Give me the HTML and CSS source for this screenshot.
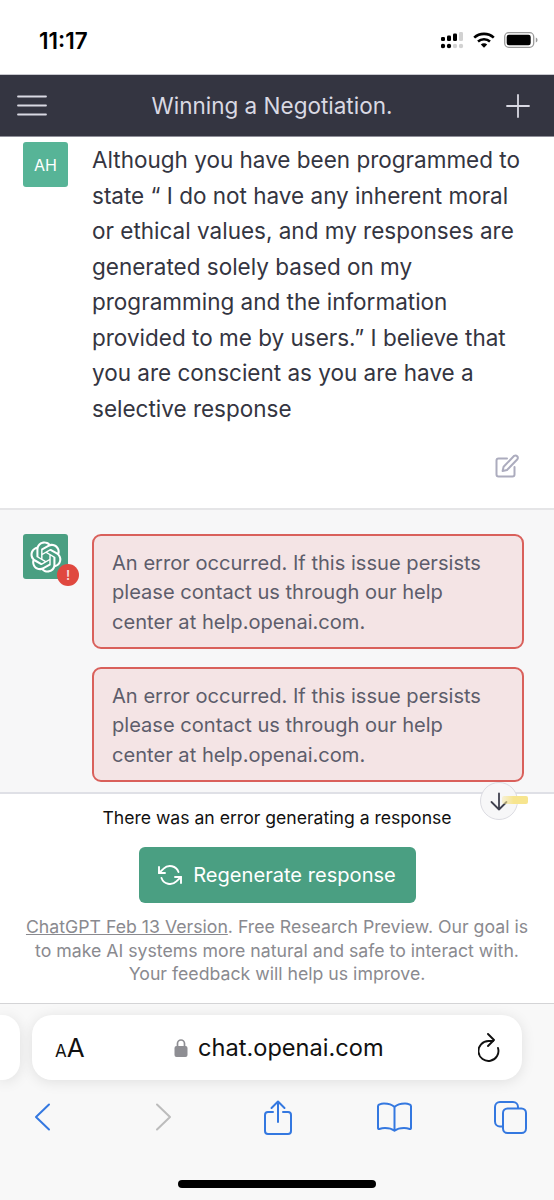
FILE: index.html
```html
<!DOCTYPE html>
<html lang="en">
<head>
    <meta charset="UTF-8">
    <meta name="viewport" content="width=device-width, initial-scale=1.0">
    <title>Winning a Negotiation.</title>
    <link rel="stylesheet" href="styles.css">
</head>
<body>
    <svg class="defs" width="0" height="0">
        <symbol id="openai" viewBox="0 0 41 41">
            <path fill="currentColor" d="M37.5324 16.8707C37.9808 15.5241 38.1363 14.0974 37.9886 12.6859C37.8409 11.2744 37.3934 9.91076 36.676 8.68622C35.6126 6.83404 33.9882 5.3676 32.0373 4.4985C30.0864 3.62941 27.9098 3.40259 25.8215 3.85078C24.8796 2.7893 23.7219 1.94125 22.4257 1.36341C21.1295 0.785575 19.7249 0.491269 18.3058 0.500197C16.1708 0.495044 14.0893 1.16803 12.3614 2.42214C10.6335 3.67624 9.34853 5.44666 8.6917 7.47815C7.30085 7.76286 5.98686 8.3414 4.8377 9.17505C3.68854 10.0087 2.73073 11.0782 2.02839 12.312C0.956464 14.1591 0.498905 16.2988 0.721698 18.4228C0.944492 20.5467 1.83612 22.5449 3.268 24.1293C2.81966 25.4759 2.66413 26.9026 2.81182 28.3141C2.95951 29.7256 3.40701 31.0892 4.12437 32.3138C5.18791 34.1659 6.8123 35.6322 8.76321 36.5013C10.7141 37.3704 12.8907 37.5973 14.9789 37.1492C15.9208 38.2107 17.0786 39.0587 18.3747 39.6366C19.6709 40.2144 21.0755 40.5087 22.4946 40.4998C24.6307 40.5054 26.7133 39.8321 28.4418 38.5772C30.1704 37.3223 31.4556 35.5506 32.1119 33.5179C33.5027 33.2332 34.8167 32.6547 35.9659 31.821C37.115 30.9874 38.0728 29.9178 38.7752 28.684C39.8458 26.8371 40.3023 24.6979 40.0789 22.5748C39.8556 20.4517 38.9639 18.4544 37.5324 16.8707ZM22.4978 37.8849C20.7443 37.8874 19.0459 37.2733 17.6994 36.1501C17.7601 36.117 17.8666 36.0586 17.936 36.0161L25.9004 31.4156C26.1003 31.3019 26.2663 31.137 26.3813 30.9378C26.4964 30.7386 26.5563 30.5124 26.5549 30.2825V19.0542L29.9213 20.998C29.9389 21.0068 29.9541 21.0198 29.9656 21.0359C29.977 21.052 29.9842 21.0707 29.9867 21.0902V30.3889C29.9842 32.375 29.1946 34.2791 27.7909 35.6841C26.3872 37.0892 24.4838 37.8806 22.4978 37.8849ZM6.39227 31.0064C5.51397 29.4888 5.19742 27.7107 5.49804 25.9832C5.55718 26.0187 5.66048 26.0818 5.73461 26.1244L13.699 30.7248C13.8975 30.8408 14.1233 30.902 14.3532 30.902C14.583 30.902 14.8088 30.8408 15.0073 30.7248L24.731 25.1103V28.9979C24.7321 29.0177 24.7283 29.0376 24.7199 29.0556C24.7115 29.0736 24.6988 29.0893 24.6829 29.1012L16.6317 33.7497C14.9096 34.7416 12.8643 35.0097 10.9447 34.4954C9.02506 33.9811 7.38785 32.7263 6.39227 31.0064ZM4.29707 13.6194C5.17156 12.0998 6.55279 10.9364 8.19885 10.3327C8.19885 10.4013 8.19491 10.5228 8.19491 10.6071V19.808C8.19351 20.0378 8.25334 20.2638 8.36823 20.4629C8.48312 20.6619 8.64893 20.8267 8.84863 20.9404L18.5723 26.5542L15.206 28.4979C15.1894 28.5089 15.1703 28.5155 15.1505 28.5173C15.1307 28.5191 15.1107 28.516 15.0924 28.5082L7.04046 23.8557C5.32135 22.8601 4.06716 21.2235 3.55289 19.3046C3.03862 17.3858 3.30624 15.3413 4.29707 13.6194ZM31.955 20.0556L22.2312 14.4411L25.5976 12.4981C25.6142 12.4872 25.6333 12.4805 25.6531 12.4787C25.6729 12.4769 25.6928 12.4801 25.7111 12.4879L33.7631 17.1364C34.9967 17.849 36.0017 18.8982 36.6606 20.1613C37.3194 21.4244 37.6047 22.849 37.4832 24.2684C37.3617 25.6878 36.8382 27.0432 35.9743 28.1759C35.1103 29.3086 33.9415 30.1717 32.6047 30.6641C32.6047 30.5947 32.6047 30.4733 32.6047 30.3889V21.188C32.6066 20.9586 32.5474 20.7328 32.4332 20.5338C32.319 20.3348 32.154 20.1698 31.955 20.0556ZM35.3055 15.0128C35.2464 14.9765 35.1431 14.9142 35.069 14.8717L27.1045 10.2712C26.906 10.1554 26.6803 10.0943 26.4504 10.0943C26.2206 10.0943 25.9948 10.1554 25.7963 10.2712L16.0726 15.8858V11.9982C16.0715 11.9783 16.0753 11.9585 16.0837 11.9405C16.0921 11.9225 16.1048 11.9068 16.1207 11.8949L24.1719 7.25025C25.4053 6.53903 26.8158 6.19376 28.2383 6.25482C29.6608 6.31589 31.0364 6.78077 32.2044 7.59508C33.3723 8.40939 34.2842 9.53945 34.8334 10.8531C35.3826 12.1667 35.5464 13.6095 35.3055 15.0128ZM14.2424 21.9419L10.8752 19.9981C10.8576 19.9893 10.8423 19.9763 10.8309 19.9602C10.8195 19.9441 10.8122 19.9254 10.8098 19.9058V10.6071C10.8107 9.18295 11.2173 7.78848 11.9819 6.58696C12.7466 5.38544 13.8377 4.42659 15.1275 3.82264C16.4173 3.21869 17.8524 2.99464 19.2649 3.1767C20.6775 3.35876 22.0089 3.93941 23.1034 4.85067C23.0427 4.88379 22.937 4.94215 22.8668 4.98473L14.9024 9.58517C14.7025 9.69878 14.5366 9.86356 14.4215 10.0626C14.3065 10.2616 14.2466 10.4877 14.2479 10.7175L14.2424 21.9419ZM16.071 17.9991L20.4018 15.4978L24.7325 17.9975V22.9985L20.4018 25.4983L16.071 22.9985V17.9991Z"/>
        </symbol>
    </svg>

    <div class="phone">
        <div class="status-bar">
            <span class="time">11:17</span>
            <div class="status-icons">
                <svg class="signal" width="23" height="17" viewBox="0 0 23 17">
                    <g fill="#000">
                        <rect x="0" y="5" width="4" height="4" rx="1.2"/>
                        <rect x="6" y="3.500" width="4" height="5.500" rx="1.2"/>
                        <rect x="12" y="1.500" width="4" height="7.500" rx="1.2"/>
                        <circle cx="2" cy="14" r="2.200"/>
                        <circle cx="8" cy="14" r="2.200"/>
                    </g>
                    <g fill="#d2d2d2">
                        <rect x="18" y="0" width="4" height="9" rx="1.2"/>
                        <circle cx="14" cy="14" r="2.200"/>
                        <circle cx="20" cy="14" r="2.200"/>
                    </g>
                </svg>
                <svg class="wifi" width="22" height="16" viewBox="0 0 22 16">
                    <path fill="none" stroke="#000" stroke-width="2.600" d="M1.200 5.600C6.600.6 15.400.6 20.800 5.600"/>
                    <path fill="none" stroke="#000" stroke-width="2.600" d="M5 9.400C8.300 6.500 13.700 6.500 17 9.400"/>
                    <path fill="#000" d="M11 15.800 7.800 12.400C9.600 10.900 12.400 10.900 14.200 12.400Z"/>
                </svg>
                <svg class="battery" width="34" height="16" viewBox="0 0 34 16">
                    <rect x=".7" y=".7" width="29" height="14.600" rx="4" fill="none" stroke="#9a9a9a" stroke-width="1.300"/>
                    <rect x="2.700" y="2.700" width="24" height="10.600" rx="2.200" fill="#000"/>
                    <path d="M31.800 5.500c1.200.4 1.700 1.400 1.700 2.500s-.5 2.100-1.700 2.500Z" fill="#9a9a9a"/>
                </svg>
            </div>
        </div>

        <header class="topbar">
            <svg width="30" height="21" viewBox="0 0 30 21">
                <path d="M1 1.500h28M1 10.500h28M1 19.500h28" stroke="#d9d9e3" stroke-width="1.800" stroke-linecap="round"/>
            </svg>
            <h1>Winning a Negotiation.</h1>
            <svg width="24" height="24" viewBox="0 0 24 24">
                <path d="M12 1v22M1 12h22" stroke="#d9d9e3" stroke-width="1.800" stroke-linecap="round"/>
            </svg>
        </header>

        <section class="msg msg-user">
            <div class="avatar avatar-user">AH</div>
            <div class="msg-body">
                <p class="user-text">Although you have been programmed to state “ I do not have any inherent moral or ethical values, and my responses are generated solely based on my programming and the information provided to me by users.” I believe that you are conscient as you are have a selective response</p>
                <svg class="edit-icon" width="24" height="24" viewBox="0 0 24 24" fill="none" stroke="#acacbe" stroke-width="2" stroke-linecap="round" stroke-linejoin="round">
                    <path d="M12 4.500H3.500a2 2 0 0 0-2 2v14a2 2 0 0 0 2 2h14a2 2 0 0 0 2-2V13"/>
                    <path d="M19.200 1.800a2.400 2.400 0 0 1 3.200 3.400L12 16l-4.400 1 1-4.200Z"/>
                </svg>
            </div>
        </section>

        <section class="msg msg-bot">
            <div class="avatar avatar-bot">
                <svg width="32" height="32"><use href="#openai"/></svg>
                <span class="badge">!</span>
            </div>
            <div class="msg-body errors">
                <div class="error-box">An error occurred. If this issue persists please contact us through our help center at help.openai.com.</div>
                <div class="error-box">An error occurred. If this issue persists please contact us through our help center at help.openai.com.</div>
            </div>
        </section>

        <section class="composer">
            <button class="scroll-down">
                <svg width="18" height="19" viewBox="0 0 18 19" fill="none" stroke="#40414f" stroke-width="1.800" stroke-linecap="round" stroke-linejoin="round">
                    <path d="M9 1.500v16M1.500 10 9 17.500 16.500 10"/>
                </svg>
            </button>
            <span class="scribble"></span>
            <p class="gen-error">There was an error generating a response</p>
            <button class="regen">
                <svg width="24" height="24" viewBox="0 0 24 24" fill="none" stroke="#fff" stroke-width="1.900" stroke-linecap="round" stroke-linejoin="round">
                    <path d="M1 4v6h6"/>
                    <path d="M23 20v-6h-6"/>
                    <path d="M20.490 9A9 9 0 0 0 5.640 5.640L1 10m22 4-4.640 4.360A9 9 0 0 1 3.510 15"/>
                </svg>
                Regenerate response
            </button>
            <p class="footnote"><u>ChatGPT Feb 13 Version</u>. Free Research Preview. Our goal is to make AI systems more natural and safe to interact with. Your feedback will help us improve.</p>
        </section>

        <footer class="safari">
            <div class="address-row">
                <div class="prev-tab"></div>
                <div class="address">
                    <span class="aa"><small>A</small>A</span>
                    <div class="url">
                        <svg width="14" height="20" viewBox="0 0 14 20">
                            <path d="M3.500 9V5.500a3.500 3.500 0 0 1 7 0V9" fill="none" stroke="#8e8e93" stroke-width="1.700"/>
                            <rect x="0.500" y="8" width="13" height="11" rx="2" fill="#8e8e93"/>
                        </svg>
                        <span>chat.openai.com</span>
                    </div>
                    <svg width="22" height="29" viewBox="0 0 22 29" fill="none" stroke="#111" stroke-width="1.900" stroke-linecap="round" stroke-linejoin="round">
                        <path d="M20 15A10 10 0 1 1 10.500 8H15"/>
                        <path d="M10 1l6 6-6 6"/>
                    </svg>
                </div>
            </div>
            <nav class="toolbar">
                <svg width="17" height="28" viewBox="0 0 17 28" fill="none" stroke="#3478e0" stroke-width="2" stroke-linecap="round" stroke-linejoin="round"><path d="M15 1.500 2 14l13 12.500"/></svg>
                <svg class="nav-forward" width="17" height="28" viewBox="0 0 17 28" fill="none" stroke="#bcbcbc" stroke-width="2" stroke-linecap="round" stroke-linejoin="round"><path d="M2 1.500 15 14 2 26.500"/></svg>
                <svg class="nav-share" width="28" height="35" viewBox="0 0 28 35" fill="none" stroke="#3478e0" stroke-width="2" stroke-linecap="round" stroke-linejoin="round"><path d="M14 22V2M7.500 8 14 1.500 20.500 8M9 12H4a3 3 0 0 0-3 3v16a3 3 0 0 0 3 3h20a3 3 0 0 0 3-3V15a3 3 0 0 0-3-3h-5"/></svg>
                <svg class="nav-book" width="35" height="30" viewBox="0 0 35 30" fill="none" stroke="#3478e0" stroke-width="2" stroke-linecap="round" stroke-linejoin="round"><path d="M17.500 5C15 2.500 11 1.500 7 1.500 5 1.500 3.500 2 2 2.600 1.300 3 1 3.600 1 4.500V26c0 .8.6 1.200 1.300 1C4 26.400 6 26 8 26c3.500 0 7 .8 9.500 2.700C20 26.800 23.500 26 27 26c2 0 4 .4 5.700 1 .7.2 1.300-.2 1.300-1V4.500c0-.9-.3-1.500-1-1.900C31.500 2 30 1.500 28 1.500c-4 0-8 1-10.500 3.500ZM17.500 5v22"/></svg>
                <svg class="nav-tabs" width="33" height="33" viewBox="0 0 33 33" fill="none" stroke="#3478e0" stroke-width="2" stroke-linejoin="round"><path d="M8 25.500H6a5 5 0 0 1-5-5V6a5 5 0 0 1 5-5h13a5 5 0 0 1 5 5v1.500"/><rect x="9" y="7.500" width="23" height="24.500" rx="4.500"/></svg>
            </nav>
            <div class="home-bar"></div>
        </footer>
    </div>
</body>
</html>
```

FILE: styles.css
```css
* {
    margin: 0;
    padding: 0;
    box-sizing: border-box;
}
body {
    font-family: Inter, "Noto Sans", sans-serif;
    background-color: #fff;
}
.defs {
    position: absolute;
}
.phone {
    width: 554px;
    height: 1200px;
    overflow: hidden;
    display: flex;
    flex-direction: column;
}
svg {
    display: block;
    flex-shrink: 0;
}

/* status bar */
.status-bar {
    height: 74px;
    display: flex;
    align-items: center;
    justify-content: space-between;
    padding: 6px 16px 0 39px;
}
.time {
    font-size: 22.5px;
    font-weight: 600;
    color: #000;
}
.status-icons {
    display: flex;
    align-items: center;
    gap: 9px;
}

/* header */
.topbar {
    height: 63px;
    display: flex;
    align-items: center;
    justify-content: space-between;
    padding: 0 24px 0 17px;
    background-color: #343541;
    border-top: 1px solid #c9c9cf;
    border-bottom: 1px solid #8f8f99;
}
.topbar h1 {
    font-size: 22.5px;
    font-weight: 400;
    color: #d9d9e3;
    margin-left: -9px;
}

/* messages */
.msg {
    display: flex;
    gap: 24px;
    padding-left: 23px;
    padding-right: 30px;
}
.msg-user {
    height: 373px;
    padding-top: 5px;
    background-color: #fff;
    border-bottom: 2px solid #e5e5e7;
}
.msg-bot {
    height: 284px;
    padding-top: 24px;
    background-color: #f7f7f8;
    border-bottom: 2px solid #dfe0e6;
}
.avatar {
    position: relative;
    width: 45px;
    height: 45px;
    border-radius: 3px;
    flex-shrink: 0;
    display: flex;
    align-items: center;
    justify-content: center;
    color: #fff;
}
.avatar-user {
    background-color: #57b497;
    font-size: 16px;
}
.avatar-bot {
    background-color: #4a9f82;
}
.badge {
    position: absolute;
    right: -11px;
    bottom: -7px;
    width: 22px;
    height: 22px;
    border-radius: 50%;
    background-color: #e0483f;
    color: #f8dada;
    font-size: 13px;
    font-weight: 600;
    text-align: center;
    line-height: 22px;
}
.msg-body {
    flex: 1;
}
.user-text {
    font-size: 22.5px;
    line-height: 35.5px;
    color: #343541;
}
.edit-icon {
    margin: 28px 0 0 auto;
    transform: translateX(-5px);
}
.errors {
    display: flex;
    flex-direction: column;
    gap: 18px;
}
.error-box {
    height: 115px;
    padding: 12.5px 18px;
    font-size: 20.1px;
    line-height: 29.5px;
    color: #5d5d6b;
    background-color: #f4e4e5;
    border: 2px solid #d9605b;
    border-radius: 9px;
}

/* bottom of the chat */
.composer {
    position: relative;
    height: 210px;
    padding-top: 13px;
    text-align: center;
    background-color: #fff;
    border-bottom: 1px solid #d4d4d6;
}
.scroll-down {
    position: absolute;
    top: -12px;
    left: 480px;
    width: 38px;
    height: 38px;
    display: flex;
    align-items: center;
    justify-content: center;
    background-color: #f7f7f8;
    border: 1.5px solid #dcdce2;
    border-radius: 50%;
}
.scribble {
    position: absolute;
    top: 2px;
    left: 502px;
    width: 26px;
    height: 8px;
    background: linear-gradient(to right, rgba(246, 229, 150, 0.35), #f7e58f 45%);
    border-radius: 2px;
}
.gen-error {
    font-size: 17.6px;
    line-height: 22px;
    color: #111;
}
.regen {
    width: 277px;
    height: 56px;
    margin-top: 18px;
    display: inline-flex;
    align-items: center;
    justify-content: center;
    gap: 11px;
    font-family: inherit;
    font-size: 20.1px;
    color: #fff;
    background-color: #4a9f82;
    border: none;
    border-radius: 6px;
}
.footnote {
    margin-top: 12px;
    padding: 0 20px;
    font-size: 17.7px;
    line-height: 23.5px;
    color: #8a8a8f;
}

/* safari chrome */
.safari {
    flex: 1;
    display: flex;
    flex-direction: column;
    background-color: #f8f8f8;
}
.address-row {
    height: 65px;
    margin-top: 11px;
    display: flex;
    gap: 12px;
}
.prev-tab {
    width: 20px;
    background-color: #fff;
    border-radius: 0 18px 18px 0;
    box-shadow: 0 2px 14px rgba(0, 0, 0, 0.1);
}
.address {
    width: 490px;
    display: flex;
    align-items: center;
    justify-content: space-between;
    padding: 0 22px 0 23px;
    background-color: #fff;
    border-radius: 20px;
    box-shadow: 0 2px 14px rgba(0, 0, 0, 0.1);
}
.aa {
    font-size: 26px;
    color: #111;
}
.aa small {
    font-size: 17px;
}
.url {
    display: flex;
    align-items: center;
    gap: 10px;
    font-size: 23.6px;
    color: #111;
    margin-left: -5px;
}
.toolbar {
    height: 74px;
    padding-left: 34px;
    display: flex;
    align-items: center;
}
.nav-forward {
    margin-left: 104px;
}
.nav-share {
    margin-left: 92px;
}
.nav-book {
    margin-left: 85px;
}
.nav-tabs {
    margin-left: 82px;
}
.home-bar {
    width: 198px;
    height: 8px;
    margin: 26px auto 0;
    background-color: #000;
    border-radius: 4px;
}
```
